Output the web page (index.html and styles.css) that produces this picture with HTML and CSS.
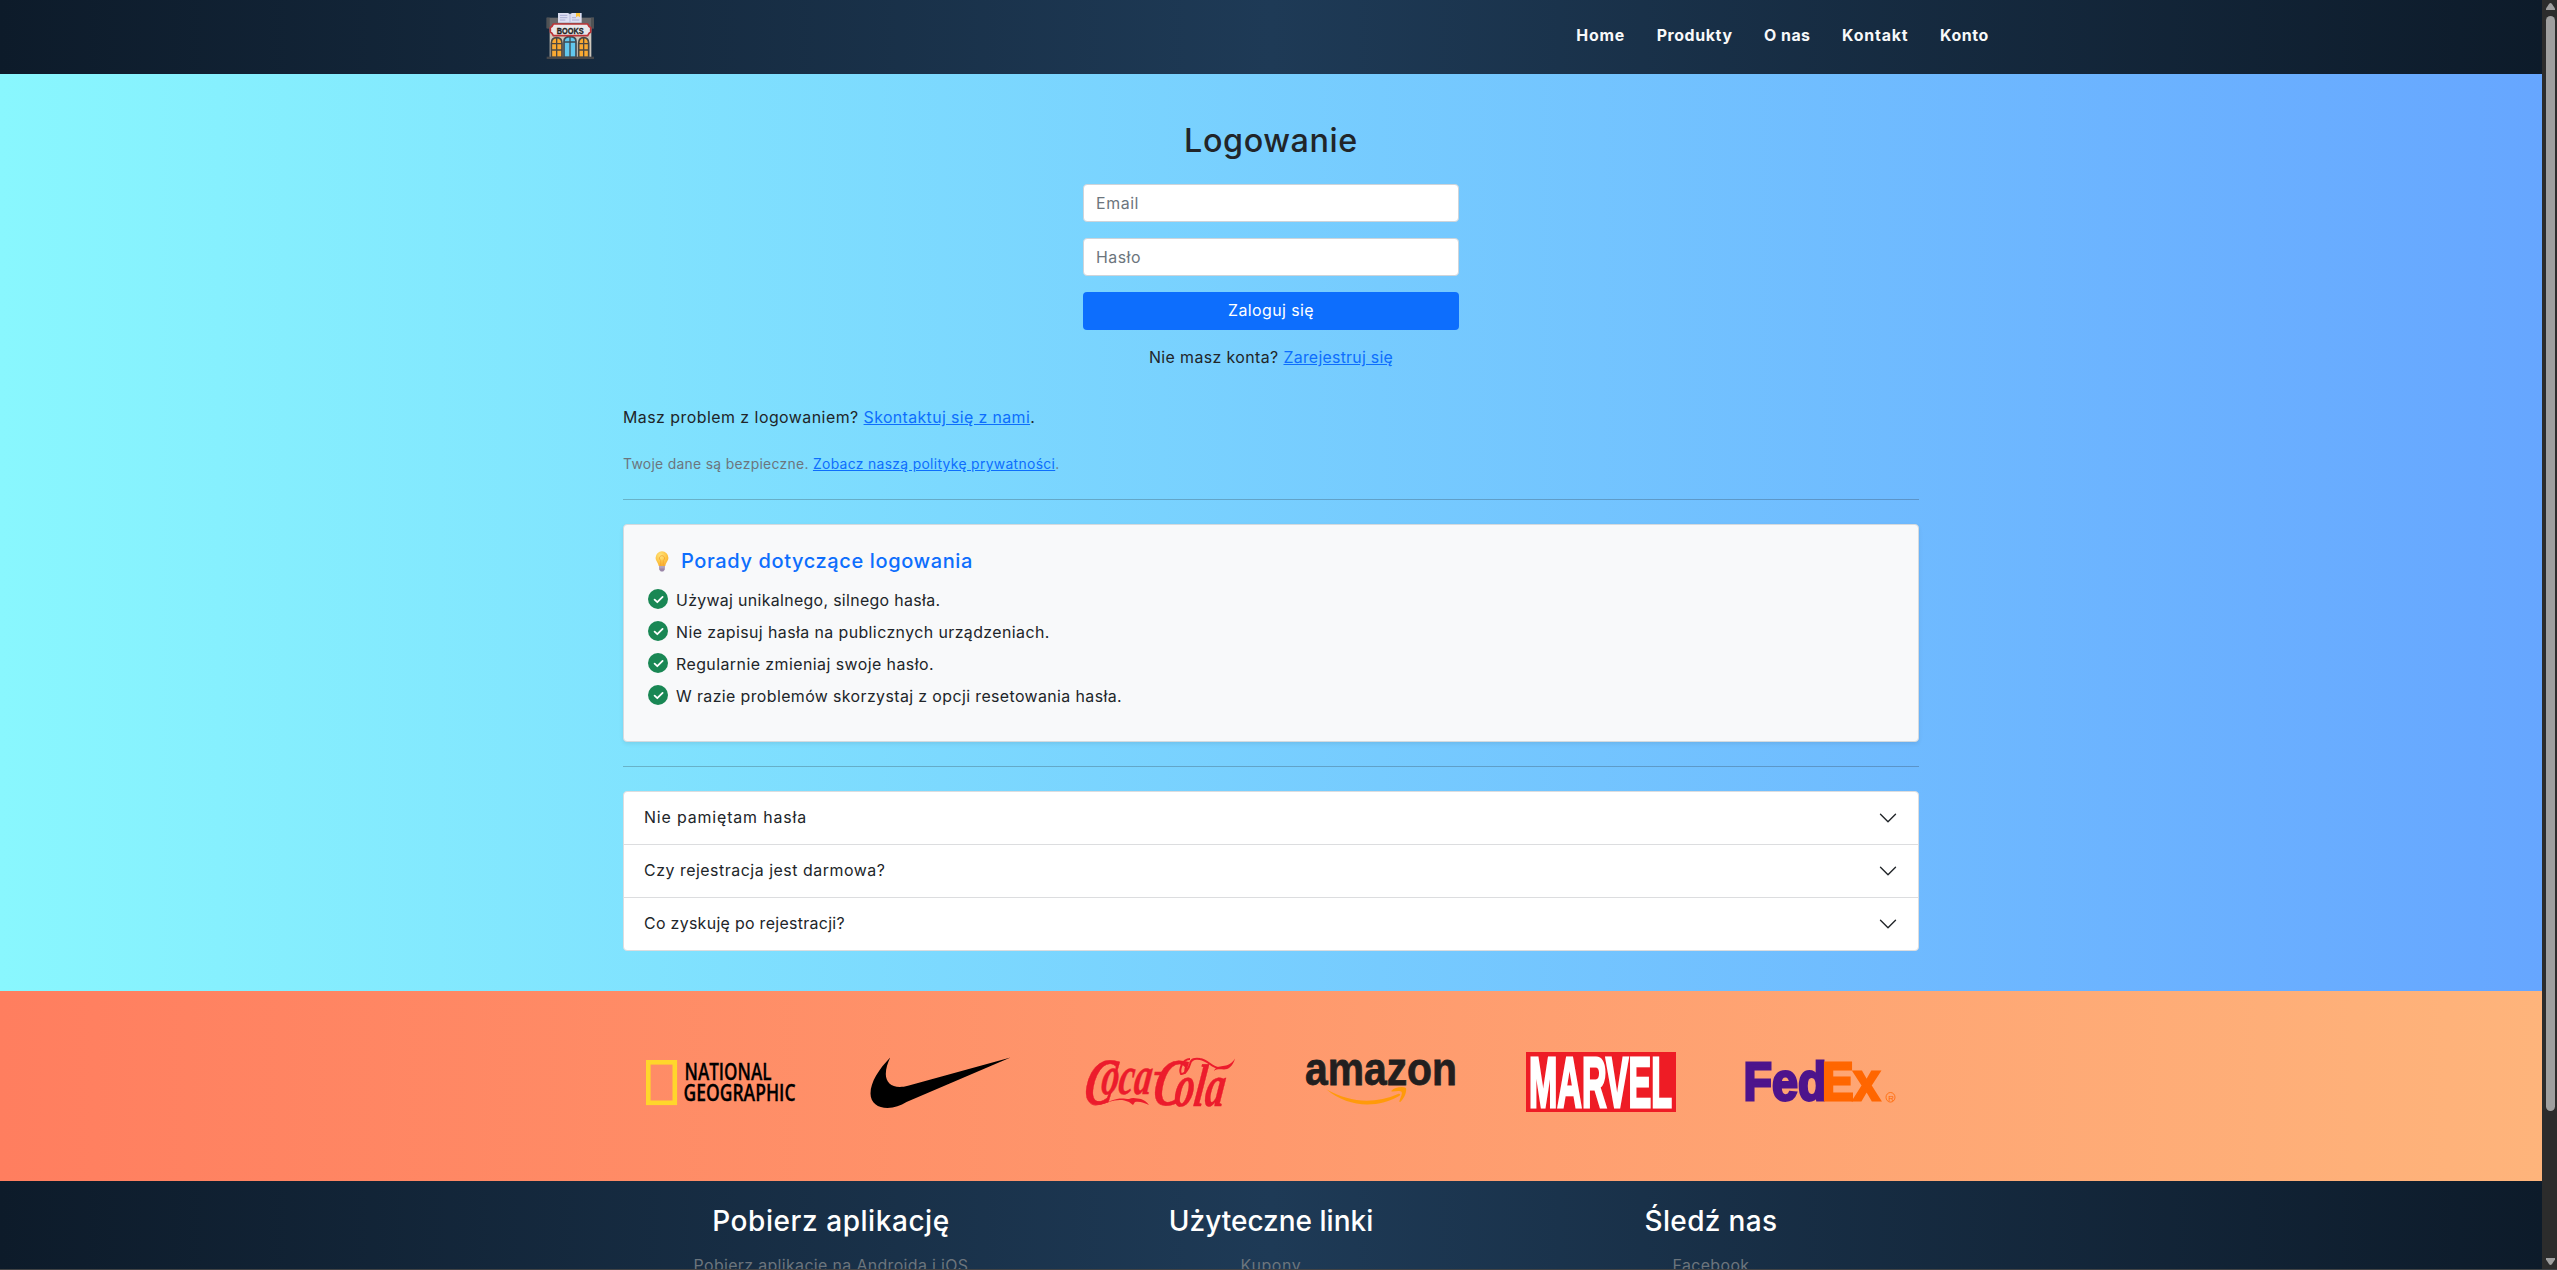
FILE: index.html
```html
<!DOCTYPE html>
<html lang="pl">
<head>
<meta charset="utf-8">
<title>Logowanie</title>
<link rel="stylesheet" href="styles.css">
</head>
<body>
<div class="page">
  <header class="topbar">
    <div class="topbar-inner">
      <a class="brand" href="#" aria-label="Books">
        <svg viewBox="45 30 150 150" width="50" height="50">
          <rect x="59" y="82" width="125" height="90" fill="#cfc8bd"/>
          <rect x="50" y="53" width="142" height="32" fill="#68686a"/>
          <rect x="50" y="53" width="9" height="32" fill="#505254"/><rect x="183" y="53" width="9" height="32" fill="#505254"/>
          <path d="M84 39h30l6 3 6-3h29v29H84z" fill="#dcdff2"/>
          <path d="M90 46h22M90 53h22M90 60h16M126 53h12M126 60h22" stroke="#a9acd4" stroke-width="3"/>
          <path d="M138 39h12v13l-6-4-6 4z" fill="#fbc33c"/><path d="M120 42v26" stroke="#b6b9dc" stroke-width="3"/>
          <path d="M64 172v-42q0-17 16-17t16 17v42zM146 172v-42q0-17 15-17t15 17v42z" fill="#f9a932" stroke="#4b4844" stroke-width="5"/>
          <path d="M80 113v59M64 131h32M64 150h32M161 113v59M146 131h30M146 150h30" stroke="#4b4844" stroke-width="4"/>
          <path d="M102 172v-48q0-14 18-14t18 14v48z" fill="#62c8ee" stroke="#3f4a52" stroke-width="5"/>
          <path d="M120 110v62M102 126h36" stroke="#3f4a52" stroke-width="4"/>
          <path d="M70 72h103l4 7 5 4v13l-5 4-4 7H70l-4-7-5-4V83l5-4z" fill="#e8e8ea" stroke="#bb3437" stroke-width="5"/>
          <text x="80" y="101" textLength="81" lengthAdjust="spacingAndGlyphs" class="brand-text">BOOKS</text>
          <rect x="50" y="170" width="142" height="7" fill="#46474a"/>
        </svg>
      </a>
      <nav class="nav">
        <a class="n1" href="#">Home</a><a class="n2" href="#">Produkty</a><a class="n3" href="#">O nas</a><a class="n4" href="#">Kontakt</a><a class="n5" href="#">Konto</a>
      </nav>
    </div>
  </header>

  <main class="main">
    <div class="container">
      <h2 class="title">Logowanie</h2>
      <form class="login">
        <input class="field email" type="email" placeholder="Email">
        <input class="field password" type="password" placeholder="Hasło">
        <button class="submit" type="button">Zaloguj się</button>
        <p class="register"><span>Nie masz konta?</span> <a href="#">Zarejestruj się</a></p>
      </form>
      <p class="help"><span>Masz problem z logowaniem?</span> <a href="#">Skontaktuj się z nami</a>.</p>
      <p class="privacy"><span>Twoje dane są bezpieczne.</span> <a href="#">Zobacz naszą politykę prywatności</a>.</p>
      <hr>
      <section class="tips">
        <h5 class="tips-title">
          <svg class="bulb" viewBox="0 0 14 21" width="14" height="21">
            <defs><radialGradient id="glow" cx=".4" cy=".3" r=".8"><stop offset="0" stop-color="#ffe680"/><stop offset=".6" stop-color="#fdc341"/><stop offset="1" stop-color="#f5a731"/></radialGradient></defs>
            <path d="M7 .3a6.4 6.4 0 0 1 6.4 6.4c0 3.3-2.6 4.6-3.1 8.3H3.7C3.200 11.300.6 10 .6 6.700A6.400 6.400 0 0 1 7 .3z" fill="url(#glow)"/>
            <path d="M5.800 14.500V9.600L4.500 8a2.600 2.600 0 1 1 5 0L8.200 9.600v4.900" fill="none" stroke="#f09a2c" stroke-width=".7"/>
            <path d="M4 15.200h6l-.3 3.600-1.500 1.700H5.800l-1.500-1.700z" fill="#9a86a8"/><path d="M4.200 16.800h5.600" stroke="#c9bcd0" stroke-width=".7"/>
          </svg>
          <span>Porady dotyczące logowania</span>
        </h5>
        <ul class="tips-list">
          <li class="t1"><i class="badge"><svg viewBox="0 0 20 20" width="20" height="20"><path d="M6.600 10.700l2.700 2.500 5.300-5.300"/></svg></i>Używaj unikalnego, silnego hasła.</li>
          <li class="t2"><i class="badge"><svg viewBox="0 0 20 20" width="20" height="20"><path d="M6.600 10.700l2.700 2.500 5.300-5.300"/></svg></i>Nie zapisuj hasła na publicznych urządzeniach.</li>
          <li class="t3"><i class="badge"><svg viewBox="0 0 20 20" width="20" height="20"><path d="M6.600 10.700l2.700 2.500 5.300-5.300"/></svg></i>Regularnie zmieniaj swoje hasło.</li>
          <li class="t4"><i class="badge"><svg viewBox="0 0 20 20" width="20" height="20"><path d="M6.600 10.700l2.700 2.500 5.300-5.300"/></svg></i>W razie problemów skorzystaj z opcji resetowania hasła.</li>
        </ul>
      </section>
      <hr>
      <section class="accordion">
        <div class="item a1"><span>Nie pamiętam hasła</span><svg viewBox="0 0 16 16" width="20" height="20"><path d="M2 5l6 6 6-6"/></svg></div>
        <div class="item a2"><span>Czy rejestracja jest darmowa?</span><svg viewBox="0 0 16 16" width="20" height="20"><path d="M2 5l6 6 6-6"/></svg></div>
        <div class="item a3"><span>Co zyskuję po rejestracji?</span><svg viewBox="0 0 16 16" width="20" height="20"><path d="M2 5l6 6 6-6"/></svg></div>
      </section>
    </div>
  </main>

  <section class="sponsors">
    <div class="sponsors-inner">
      <svg viewBox="0 0 150 60" width="150" height="60">
        <rect x="2.300" y="10.300" width="26.500" height="40.500" fill="none" stroke="#ffd62b" stroke-width="4.600"/>
        <g class="natgeo"><text x="38.500" y="28" textLength="87" lengthAdjust="spacingAndGlyphs">NATIONAL</text><text x="37.500" y="48.700" textLength="112" lengthAdjust="spacingAndGlyphs">GEOGRAPHIC</text></g>
      </svg>
      <svg viewBox="0 0 150 60" width="150" height="60">
        <path d="M24.200 5.500C13 17 4.500 30 4.500 41.500 4.500 51 12 56 21.500 56c7 0 13-2.500 19-6L144.500 5.500 42 33.800C28 37.500 19.800 32 19.800 22c0-6 2-11 4.400-16.500z" fill="#000"/>
      </svg>
      <svg viewBox="0 0 150 60" width="150" height="60">
        <g class="cola">
          <text transform="translate(-4 52) skewX(-10)" font-size="66" textLength="30" lengthAdjust="spacingAndGlyphs">C</text>
          <text transform="translate(14 42) skewX(-8)" font-size="54" textLength="50" lengthAdjust="spacingAndGlyphs">oca</text>
          <text x="68" y="30" font-size="34" textLength="8" lengthAdjust="spacingAndGlyphs">-</text>
          <text transform="translate(65 53) skewX(-10)" font-size="67" textLength="30" lengthAdjust="spacingAndGlyphs">C</text>
          <text transform="translate(87 54) skewX(-8)" font-size="60" textLength="50" lengthAdjust="spacingAndGlyphs">ola</text>
        </g>
        <path d="M3 50c6 6 16 0 28-3 6-1 8 0 12 0 4-2 9 0 12 0 3 1 6 3 8 6-5-2-9-4-14-3l-2 3-4-3c-10-5-20 0-30 3-5 1-8 0-10-3zM128 19c3-8 14-1 21-12.500-2 8-7 11-11 11-3 0-7-1-10 1.500z" fill="#ec1c2c"/>
        <path d="M104 7c-8 0-11 11-9 15 4 1 8-6 9-10 1-5 5-6 10-5 8 1 12 9 19 9" fill="none" stroke="#ec1c2c" stroke-width="2"/>
      </svg>
      <svg viewBox="0 0 150 60" width="150" height="60">
        <text x="-1" y="33" class="amazon" textLength="152" lengthAdjust="spacingAndGlyphs">amazon</text>
        <path d="M20.400 37.300C44 51 69 52 92 42c2-1 3 .5 1.500 1.700C72 56.500 42 56 20.400 37.300z" fill="#ff9a0a"/>
        <path d="M85.500 38.700c3-3.500 11-4.500 14.500-2.800.8 3.800-1.500 10-5.500 13.800-1 .5-1.500 0-1.100-1 1.500-3.500 3-7 2.300-8.700-1-1.500-5-1-9.200-.6-1 0-1.500-.2-1-.7z" fill="#ff9a0a"/>
      </svg>
      <svg viewBox="0 0 150 60" width="150" height="60">
        <rect width="150" height="60" fill="#ee1c25"/>
        <text x="3" y="54.500" class="marvel" textLength="143" lengthAdjust="spacingAndGlyphs">MARVEL</text>
      </svg>
      <svg viewBox="0 0 150 60" width="150" height="60">
        <g class="fedex"><text x="-2.500" y="48" fill="#4d148c" stroke="#4d148c" textLength="83" lengthAdjust="spacingAndGlyphs">Fed</text><text x="76" y="48" fill="#ff6600" stroke="#ff6600" textLength="58" lengthAdjust="spacingAndGlyphs">Ex</text></g>
        <ellipse cx="144.500" cy="45.300" rx="4.500" ry="4.800" fill="none" stroke="#ff6600" stroke-width=".8"/>
        <text x="142.200" y="48.500" class="reg">R</text>
      </svg>
    </div>
  </section>

  <footer class="footer">
    <div class="footer-inner">
      <div class="col"><h3 class="f1">Pobierz aplikację</h3><p class="g1">Pobierz aplikację na Androida i iOS</p></div>
      <div class="col"><h3>Użyteczne linki</h3><p class="g2">Kupony</p></div>
      <div class="col"><h3 class="f3">Śledź nas</h3><p class="g3">Facebook</p></div>
    </div>
  </footer>
</div>
<aside class="scrollbar">
  <svg viewBox="0 0 9 7" width="9" height="7"><path d="M4.500 0Q5.300 0 6 1l3 4.500V7H0V5.500L3 1Q3.700 0 4.500 0z"/></svg>
  <div class="thumb"></div>
  <svg class="down" viewBox="0 0 9 7" width="9" height="7"><path d="M4.500 7Q5.300 7 6 6l3-4.500V0H0v1.500L3 6q.7 1 1.500 1z"/></svg>
</aside>
</body>
</html>
```
FILE: styles.css
```css
*{box-sizing:border-box}
body{margin:0;height:1270px;overflow:hidden;display:flex;background:#2c2c2c;border-bottom:1px solid #414345;font:400 15.9px/24px Inter,"Noto Sans",sans-serif;color:#212529;letter-spacing:.4px}
h2,h3,h5,p,ul{margin:0;padding:0}
svg{display:block;flex:none}
a{color:#0d6efd}
.page{width:2542px;height:1269px;overflow:hidden}

.topbar{height:74px;background:linear-gradient(90deg,#0d1b2a,#1e3a56 50%,#0d1b2a)}
.topbar-inner{width:1452px;height:74px;margin:0 auto;padding-right:8px;display:flex;justify-content:space-between;align-items:center}
.brand{padding-bottom:4px}
.brand-text{font:700 29px "Liberation Sans",sans-serif;fill:#222;stroke:#222;stroke-width:1;letter-spacing:0}
.nav{display:flex;gap:31.5px;padding-bottom:3px}
.nav a{color:#f8f9fa;font-weight:700;text-decoration:none}
.n1{letter-spacing:.84px}.n2{letter-spacing:.62px}.n3{letter-spacing:.48px}.n4{letter-spacing:.84px}.n5{letter-spacing:.63px}

.main{height:917px;padding-top:48px;background:linear-gradient(90deg,#89f7fe,#66a6ff)}
.container{width:1296px;margin:0 auto}
.title{font-size:32.300px;line-height:38px;font-weight:500;text-align:center;letter-spacing:.6px}
.login{width:376px;margin:24px auto 36px;display:flex;flex-direction:column;gap:16px}
.field{height:38px;padding:6px 12px;border:1px solid #ced4da;border-radius:4px;background:#fff;font:inherit}
.field::placeholder{color:#6c757d;opacity:1}
.email{letter-spacing:.58px}.password{letter-spacing:.48px}
.submit{height:38px;border:0;border-radius:4px;background:#0d6efd;color:#fff;font:inherit;letter-spacing:.43px}
.register{text-align:center}
.register a{letter-spacing:.25px}
.help span{letter-spacing:.48px}
.help a{letter-spacing:.38px}
.privacy{margin-top:24px;font-size:13.900px;line-height:21px;color:#6c757d;letter-spacing:.3px}
.privacy a{letter-spacing:.32px}
hr{margin:24px 0;border:0;height:1px;background:#212529;opacity:.25}
.tips{height:218px;padding:24px;border:1px solid #d5dade;border-radius:4px;background:#f8f9fa;box-shadow:0 2px 4px rgba(0,0,0,.075)}
.tips-title{display:flex;align-items:center;gap:12px;padding-left:7px;height:24px;margin-bottom:16px;font-size:20px;font-weight:500;color:#0d6efd;letter-spacing:.62px}
.tips-list{list-style:none;display:flex;flex-direction:column;gap:8px}
.tips-list li{display:flex;gap:8px;height:24px}
.badge{width:20px;height:20px;border-radius:50%;background:#198754}
.badge path{fill:none;stroke:#fff;stroke-width:1.8;stroke-linecap:round;stroke-linejoin:round}
.t1{letter-spacing:.33px}.t2{letter-spacing:.42px}.t3{letter-spacing:.45px}
.accordion{border:1px solid #dcdddf;border-radius:4px;background:#fff}
.item{display:flex;justify-content:space-between;align-items:center;height:52px;padding:0 20px}
.item+.item{height:53px;border-top:1px solid #dcdddf}
.item path{fill:none;stroke:#212529;stroke-width:1.1;stroke-linecap:round;stroke-linejoin:round}
.a1{letter-spacing:.86px}.a2{letter-spacing:.53px}.a3{letter-spacing:.32px}

.sponsors{height:190px;padding-top:61px;background:linear-gradient(90deg,#ff7e5f,#feb47b)}
.sponsors-inner{width:1320px;margin:0 auto;display:flex;justify-content:space-around}
.sponsors svg{letter-spacing:0;overflow:visible}
.natgeo{font:600 22.500px "Open Sans",sans-serif;fill:#000;stroke:#000;stroke-width:.3}
.cola{font-family:"Liberation Serif",serif;font-style:italic;font-weight:700;fill:#ec1c2c;stroke:#ec1c2c;stroke-width:.5}
.amazon{font:700 46px "Liberation Sans",sans-serif;fill:#221f1f;stroke:#221f1f;stroke-width:.8}
.marvel{font:700 70px "Liberation Sans",sans-serif;fill:#fff;stroke:#fff;stroke-width:3}
.fedex{font:700 54px "Liberation Sans",sans-serif;stroke-width:2.800}
.reg{font:400 8px "Liberation Sans",sans-serif;fill:#ff6600}

.footer{height:88px;padding-top:24px;overflow:hidden;background:linear-gradient(90deg,#0d1b2a,#1e3a56 50%,#0d1b2a)}
.footer-inner{width:1320px;margin:0 auto;display:grid;grid-template-columns:repeat(3,1fr);text-align:center}
.footer h3{font-size:28px;line-height:33px;font-weight:500;color:#fff;margin-bottom:16px;letter-spacing:0}
.footer .f1{letter-spacing:.56px}.footer .f3{letter-spacing:.35px}
.footer p{color:#6c757d}
.g1{letter-spacing:.37px}.g2{letter-spacing:.65px}

.scrollbar{width:15px;height:1269px;padding:3px 0 4px 4px;display:flex;flex-direction:column;background:#2c2c2c}
.scrollbar path{fill:#9f9f9f}
.thumb{width:9px;height:1095px;margin-top:6px;border-radius:5px;background:#9f9f9f}
.down{margin-top:auto}
```
